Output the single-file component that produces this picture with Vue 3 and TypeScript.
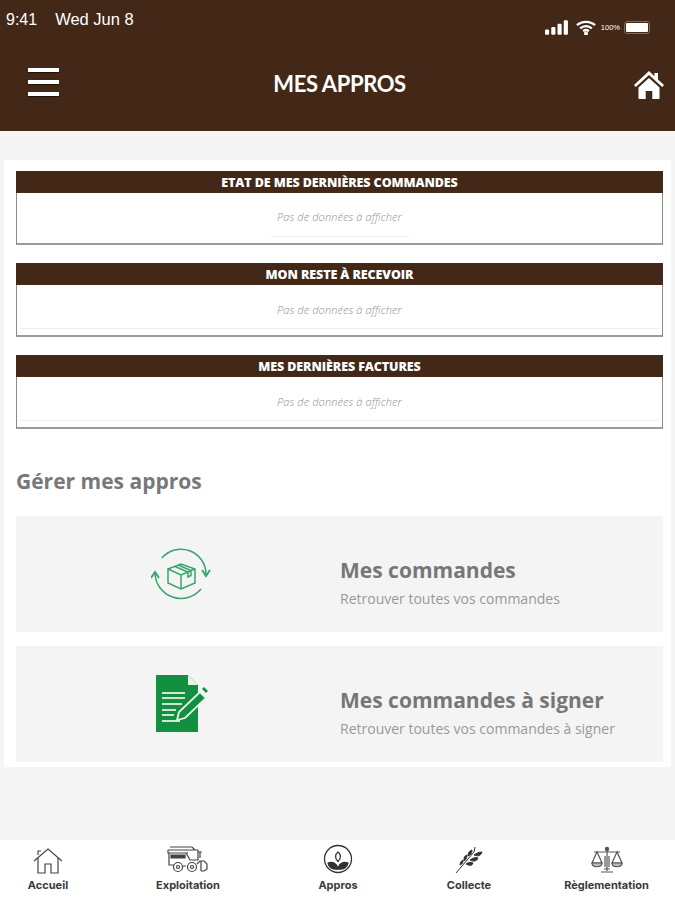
<script setup lang="ts">
const panels = ['ETAT DE MES DERNIÈRES COMMANDES', 'MON RESTE À RECEVOIR', 'MES DERNIÈRES FACTURES'];
</script>

<template>
  <div class="page">
    <header class="top">
      <div class="status">
        <span class="time">9:41</span>
        <span class="date">Wed Jun 8</span>
        <div class="status-right">
          <svg width="25" height="15" viewBox="0 0 24 14" fill="#fff">
            <rect x="0" y="9" width="4" height="5" rx="1" />
            <rect x="6" y="6.500" width="4" height="7.500" rx="1" />
            <rect x="12" y="3.500" width="4" height="10.500" rx="1" />
            <rect x="18" y="0" width="4" height="14" rx="1" />
          </svg>
          <svg class="wifi" width="20" height="15" viewBox="0 0 20 15" fill="none" stroke="#fff" stroke-width="2.400">
            <path d="M1 5.200C6 .7 14 .7 19 5.200" />
            <path d="M4.200 8.400c3.300-3 8.300-3 11.600 0" />
            <path d="M7.200 11.200c1.600-1.300 4-1.300 5.600 0" />
            <circle cx="10" cy="13.400" r="0.800" fill="#fff" />
          </svg>
          <span class="pct">100%</span>
          <span class="battery"><i></i></span>
        </div>
      </div>
      <div class="bar">
        <div class="burger"><i></i><i></i><i></i></div>
        <h1>MES APPROS</h1>
        <svg class="home" width="32" height="30" viewBox="0 0 32 30" fill="#fff">
          <path d="M16 1 1 15l1.800 2L16 5l13.200 12 1.800-2-6-5.600V3h-3.600v3.200z" />
          <path d="M5.500 17.400 16 8l10.500 9.400V29h-7.200v-8h-6.600v8H5.500z" />
        </svg>
      </div>
    </header>

    <main class="content">
      <section v-for="(p, i) in panels" :key="p" class="panel">
        <h2>{{ p }}</h2>
        <div class="panel-body" :class="{ short: i === 0 }">
          <em>Pas de données à afficher</em>
        </div>
      </section>

      <h3>Gérer mes appros</h3>

      <a class="card">
        <div class="card-icon">
          <svg width="60" height="54" viewBox="0 0 60 54" fill="none" stroke="#35a56b" stroke-width="1.500">
            <path d="M11 11A25 25 0 0 1 55 27" />
            <path d="m51 23 4 6 4-6" stroke-width="1.900" />
            <path d="M4 26A26 26 0 0 0 50 42" />
            <path d="m0 31 4-6 4 6" stroke-width="1.900" />
            <path d="m17 22 13-5 14 5v14l-14 6-13-6z" />
            <path d="m17 22 13 6 14-6M30 28v14M24 19.500l13 5.500v5l3-1.500v-5L27 18" />
          </svg>
        </div>
        <div class="card-text">
          <strong>Mes commandes</strong>
          <span>Retrouver toutes vos commandes</span>
        </div>
      </a>

      <a class="card">
        <div class="card-icon">
          <svg width="60" height="60" viewBox="0 0 60 60">
            <path d="M5 1h32l10 10v47H5z" fill="#12903f" />
            <path d="m37 1 10 10H37z" fill="#e8f3ec" />
            <path d="M11 19h23M11 24h23M11 30h20M11 36h14M11 41h12M11 47h18" stroke="#cfe6d6" stroke-width="2" fill="none" />
            <path d="m26 46 2-8 21-20 6 6-21 20z" fill="#12903f" stroke="#e6f1e9" stroke-width="1.800" />
            <path d="m51 15 2-2 4 4-2 2z" fill="#12903f" />
          </svg>
        </div>
        <div class="card-text">
          <strong>Mes commandes à signer</strong>
          <span>Retrouver toutes vos commandes à signer</span>
        </div>
      </a>
    </main>

    <nav class="tabs">
      <div class="tab">
        <svg width="30" height="26" viewBox="0 0 30 26" fill="none" stroke="#444" stroke-width="1.200">
          <path d="M1 13 15 1l14 12" />
          <path d="M5 10v15h7v-9h6v9h7V10" />
          <path d="M5 7V3h3" />
        </svg>
        <span>Accueil</span>
      </div>
      <div class="tab">
        <svg width="42" height="28" viewBox="0 0 42 28" fill="none" stroke="#444" stroke-width="1.200">
          <path d="M1 4h30M3 1h22l3 3M1 4v3h20" />
          <path d="M2 7v12h5M19 7l4 7h8V4M31 6h4M33 6v6" />
          <circle cx="11" cy="21" r="4.500" />
          <circle cx="11" cy="21" r="1.500" />
          <circle cx="25" cy="21" r="4.500" />
          <circle cx="25" cy="21" r="1.500" />
          <path d="M16 20h3M30 18l3-3h4l3 3v5l-3 2h-3M34 15v10" />
          <path d="M4 9h14v3H4z" fill="#444" />
        </svg>
        <span>Exploitation</span>
      </div>
      <div class="tab">
        <svg width="30" height="30" viewBox="0 0 30 30" fill="none" stroke="#333" stroke-width="1.300">
          <circle cx="15" cy="15" r="13.500" />
          <path d="M15 8c3 2.500 3.500 6 0 9.500-3.500-3.500-3-7 0-9.500z" />
          <path d="M15 25c-5.500 1-9.500-2-10-6 5-1.500 9 .5 10 6zM15 25c5.500 1 9.500-2 10-6-5-1.500-9 .5-10 6z" fill="#333" />
        </svg>
        <span>Appros</span>
      </div>
      <div class="tab">
        <svg width="28" height="28" viewBox="0 0 28 28" fill="none" stroke="#333" stroke-width="1">
          <path d="M1 27 19 6M20 1l-1 5" />
          <path d="M19 9c3-2 5-3 8-3-1 3-3 5-8 3zM15 14c3-2 5-3 8-2-1 3-4 4-8 2zM11 18c3-2 5-2 7-1-1 3-3 3-7 1z" fill="#333" />
          <path d="M17 4c-3 1-4 3-4 6 3-1 4-3 4-6zM12 9c-3 1-3 3-3 6 2-1 3-3 3-6zM8 14c-2 1-3 3-3 5 3-1 3-3 3-5z" fill="#333" />
        </svg>
        <span>Collecte</span>
      </div>
      <div class="tab">
        <svg width="34" height="28" viewBox="0 0 34 28" fill="none" stroke="#555" stroke-width="1.200">
          <path d="M17 1v24M4 6h26M11 26h12M14 23h6" />
          <circle cx="17" cy="3" r="1.600" fill="#555" />
          <path d="M7 6 2 17h10zM27 6l-5 11h10z" />
          <path d="M2 17c0 5 10 5 10 0zM22 17c0 5 10 5 10 0z" fill="#bbb" />
          <path d="M14 10h6v11h-6z" fill="#999" stroke="none" />
        </svg>
        <span>Règlementation</span>
      </div>
    </nav>
  </div>
</template>

<style>
html,
body {
  margin: 0;
  background: #f5f5f5;
}
</style>

<style scoped>
.page {
  width: 675px;
  height: 900px;
  display: flex;
  flex-direction: column;
  background: #f5f5f5;
  font-family: 'Open Sans', sans-serif;
  overflow: hidden;
}

.top {
  height: 131px;
  background: #432818;
  color: #fff;
  display: flex;
  flex-direction: column;
  flex: none;
}

.status {
  height: 40px;
  display: flex;
  align-items: center;
  padding: 0 25px 0 6px;
  font-family: 'Liberation Sans', sans-serif;
  font-size: 16px;
}

.date {
  margin-left: 18px;
  font-size: 16.500px;
}

.status-right {
  margin-left: auto;
  display: flex;
  align-items: center;
  padding-top: 16px;
}

.wifi {
  margin-left: 6px;
}

.pct {
  font-size: 7.500px;
  margin: 0 4px 0 5px;
}

.battery {
  width: 26px;
  height: 13px;
  display: block;
  border: 1px solid #7d6a5d;
  border-radius: 3px;
  padding: 1px;
  box-sizing: border-box;
}

.battery i {
  display: block;
  height: 100%;
  background: #fff;
  border-radius: 1px;
}

.bar {
  height: 88px;
  display: flex;
  align-items: center;
  justify-content: space-between;
  padding: 0 10px 6px 28px;
}

.burger {
  width: 31px;
  display: flex;
  flex-direction: column;
  gap: 8px;
}

.burger i {
  height: 4px;
  background: #fff;
  box-shadow: 0 1px 1px rgba(0, 0, 0, 0.6);
}

h1 {
  margin: 2px 13px 0 0;
  font-family: Lato, sans-serif;
  font-size: 22px;
  font-weight: 700;
  letter-spacing: -0.4px;
}

.home {
  display: block;
  margin-top: 6px;
}

.content {
  margin: 29px 4px 0;
  height: 607px;
  padding: 11px 8px 0 12px;
  box-sizing: border-box;
  background: #fff;
  display: flex;
  flex-direction: column;
  flex: none;
}

.panel {
  height: 74px;
  margin-bottom: 18px;
  border: 1px solid #8a8a80;
  border-top: 0;
  border-bottom-width: 2px;
  border-bottom-color: #9c9c96;
  box-sizing: border-box;
  flex: none;
}

.panel h2 {
  margin: 0 -1px;
  height: 22px;
  background: #432818;
  color: #fff;
  font-size: 12.500px;
  font-weight: 800;
  line-height: 24px;
  letter-spacing: -0.1px;
  text-align: center;
}

.panel-body {
  height: 44px;
  margin: 0 3px;
  padding-top: 17px;
  border-bottom: 1px solid #eeeeee;
  box-sizing: border-box;
  text-align: center;
}

.panel-body.short {
  width: 138px;
  margin: 0 auto;
  padding-top: 16px;
}

.panel-body em {
  display: block;
  font-size: 11px;
  font-weight: 300;
  line-height: 16px;
  letter-spacing: 0.1px;
  color: #8f8f8f;
  white-space: nowrap;
}

h3 {
  margin: 20px 0 21px;
  font-size: 21px;
  line-height: 28px;
  font-weight: 700;
  color: #787878;
  flex: none;
}

.card {
  height: 116px;
  background: #f4f4f4;
  display: flex;
  align-items: center;
  flex: none;
}

.card + .card {
  margin-top: 14px;
}

.card-icon {
  width: 324px;
  display: flex;
  justify-content: center;
  padding-left: 6px;
  box-sizing: border-box;
}

.card-text {
  display: flex;
  flex-direction: column;
  gap: 4px;
  padding-top: 16px;
}

.card-text strong {
  font-size: 21px;
  line-height: 29px;
  font-weight: 700;
  color: #777;
}

.card-text span {
  font-size: 14px;
  line-height: 19px;
  color: #999;
}

.tabs {
  margin-top: auto;
  height: 60px;
  background: #fff;
  display: grid;
  grid-template-columns: 96px 184px 116px 146px 129px;
  flex: none;
}

.tab {
  display: flex;
  flex-direction: column;
  align-items: center;
  justify-content: flex-end;
  padding-bottom: 8px;
  gap: 5px;
}

.tab svg {
  display: block;
}

.tab span {
  font-family: Inter, sans-serif;
  font-size: 11px;
  line-height: 13px;
  font-weight: 700;
  color: #3a3a3a;
}
</style>
